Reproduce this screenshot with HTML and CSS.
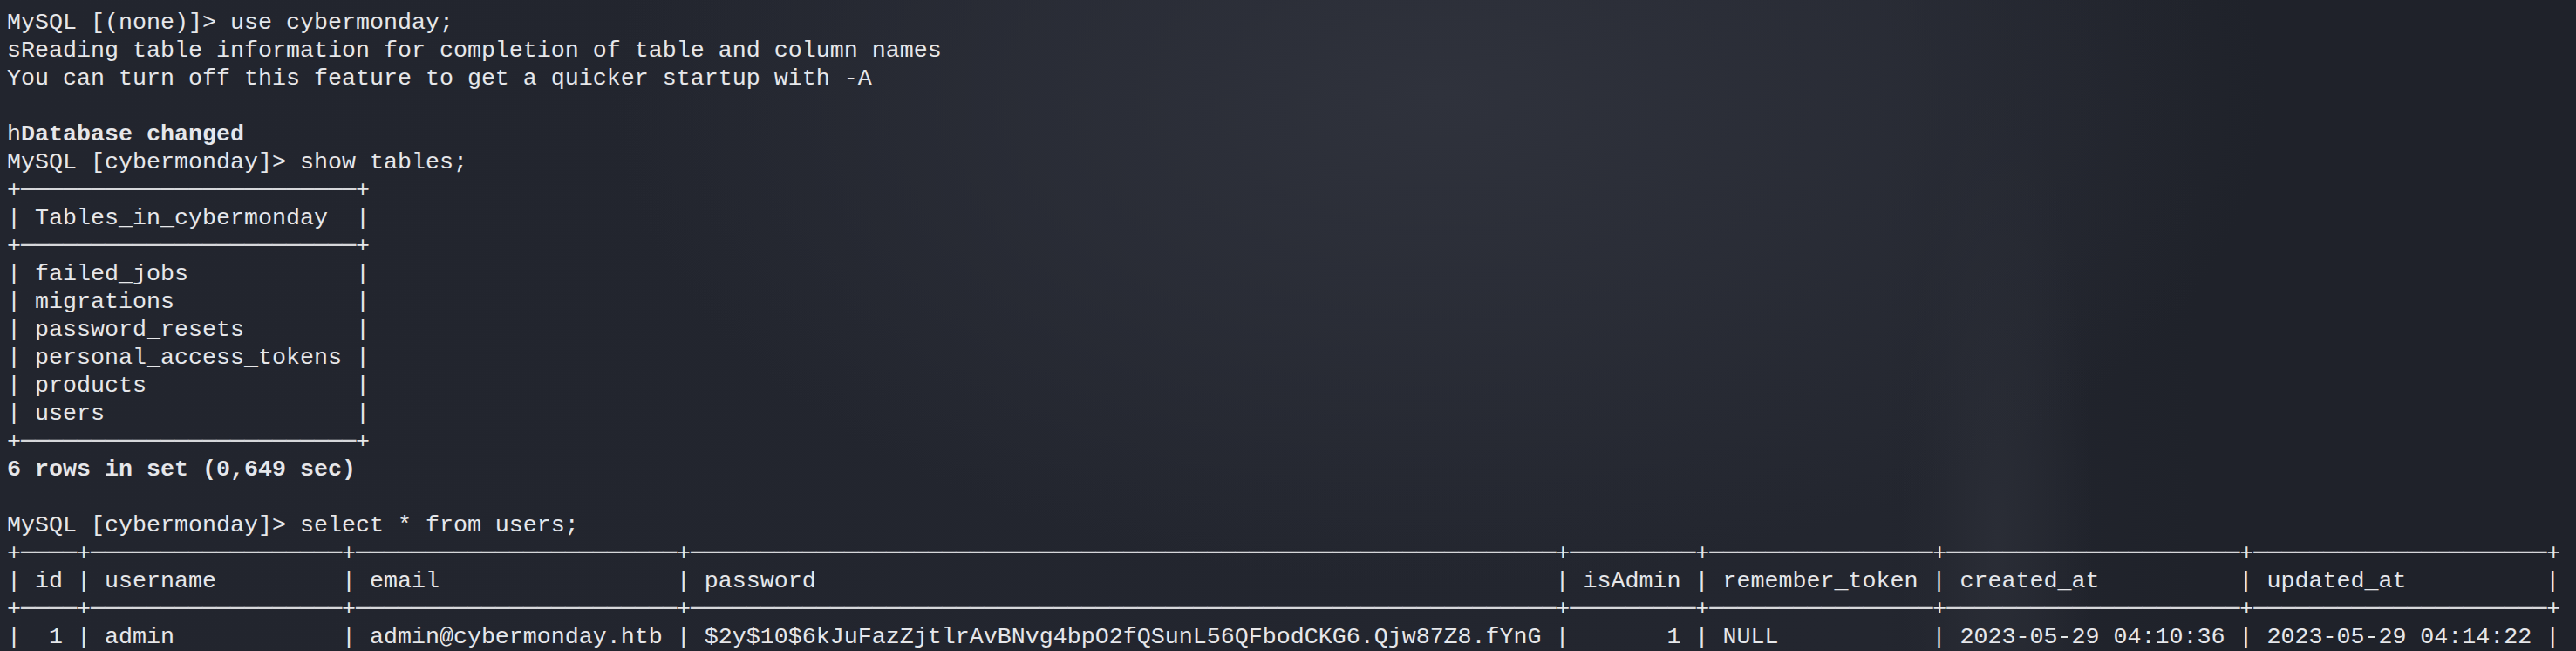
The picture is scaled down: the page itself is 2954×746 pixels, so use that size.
FILE: index.html
```html
<!DOCTYPE html>
<html lang="en">
<head>
    <meta charset="UTF-8">
    <title>MySQL - cybermonday</title>
    <link rel="stylesheet" href="styles.css">
</head>
<body>
<div class="term">
    <div class="ln">MySQL [(none)]&gt; use cybermonday;</div>
    <div class="ln">sReading table information for completion of table and column names</div>
    <div class="ln">You can turn off this feature to get a quicker startup with -A</div>
    <div class="ln"></div>
    <div class="ln">h<b>Database changed</b></div>
    <div class="ln">MySQL [cybermonday]&gt; show tables;</div>
    <div class="ln">+<span class="rule" data-n="24"></span>+</div>
    <div class="ln">| Tables_in_cybermonday  |</div>
    <div class="ln">+<span class="rule" data-n="24"></span>+</div>
    <div class="ln">| failed_jobs            |</div>
    <div class="ln">| migrations             |</div>
    <div class="ln">| password_resets        |</div>
    <div class="ln">| personal_access_tokens |</div>
    <div class="ln">| products               |</div>
    <div class="ln">| users                  |</div>
    <div class="ln">+<span class="rule" data-n="24"></span>+</div>
    <div class="ln"><b>6 rows in set (0,649 sec)</b></div>
    <div class="ln"></div>
    <div class="ln">MySQL [cybermonday]&gt; select * from users;</div>
    <div class="ln">+<span class="rule" data-n="4"></span>+<span class="rule" data-n="18"></span>+<span class="rule" data-n="23"></span>+<span class="rule" data-n="62"></span>+<span class="rule" data-n="9"></span>+<span class="rule" data-n="16"></span>+<span class="rule" data-n="21"></span>+<span class="rule" data-n="21"></span>+</div>
    <div class="ln">| id | username         | email                 | password                                                     | isAdmin | remember_token | created_at          | updated_at          |</div>
    <div class="ln">+<span class="rule" data-n="4"></span>+<span class="rule" data-n="18"></span>+<span class="rule" data-n="23"></span>+<span class="rule" data-n="62"></span>+<span class="rule" data-n="9"></span>+<span class="rule" data-n="16"></span>+<span class="rule" data-n="21"></span>+<span class="rule" data-n="21"></span>+</div>
    <div class="ln">|  1 | admin            | admin@cybermonday.htb | $2y$10$6kJuFazZjtlrAvBNvg4bpO2fQSunL56QFbodCKG6.Qjw87Z8.fYnG |       1 | NULL           | 2023-05-29 04:10:36 | 2023-05-29 04:14:22 |</div>
</div>
<script>
    // table borders: fill each rule with n box-drawing dashes
    document.querySelectorAll(".rule").forEach(el => {
        el.textContent = "\u2500".repeat(Number(el.dataset.n));
    });
</script>
</body>
</html>
```

FILE: styles.css
```css
html, body {
    height: 100%;
}
body {
    margin: 0;
    overflow: hidden;
    color: #e6e7ea;
    background-color: #21242d;
    background-image:
        radial-gradient(ellipse 950px 560px at 1650px 110px, rgba(47, 50, 60, 1) 0%, rgba(46, 49, 59, 0.6) 50%, rgba(46, 49, 59, 0) 100%),
        radial-gradient(ellipse 110px 520px at 2290px 620px, rgba(42, 45, 54, 1) 0%, rgba(42, 45, 54, 0) 100%),
        linear-gradient(90deg, #22252e 0, #23262f 2150px, #1f222a 2520px, #1f222a 100%);
}
.term {
    padding: 10px 8px 0;
    font-family: "Liberation Mono", "DejaVu Sans Mono", monospace;
    font-size: 26.667px;
    line-height: 32px;
}
.ln {
    height: 32px;
    white-space: pre;
}
.term b {
    font-weight: bold;
}
.rule {
    display: inline-block;
    vertical-align: top;
    height: 32px;
    font-family: "DejaVu Sans Mono", monospace;
    font-size: 26.58px;
    line-height: 30px;
    color: #d6d7da;
}
```
